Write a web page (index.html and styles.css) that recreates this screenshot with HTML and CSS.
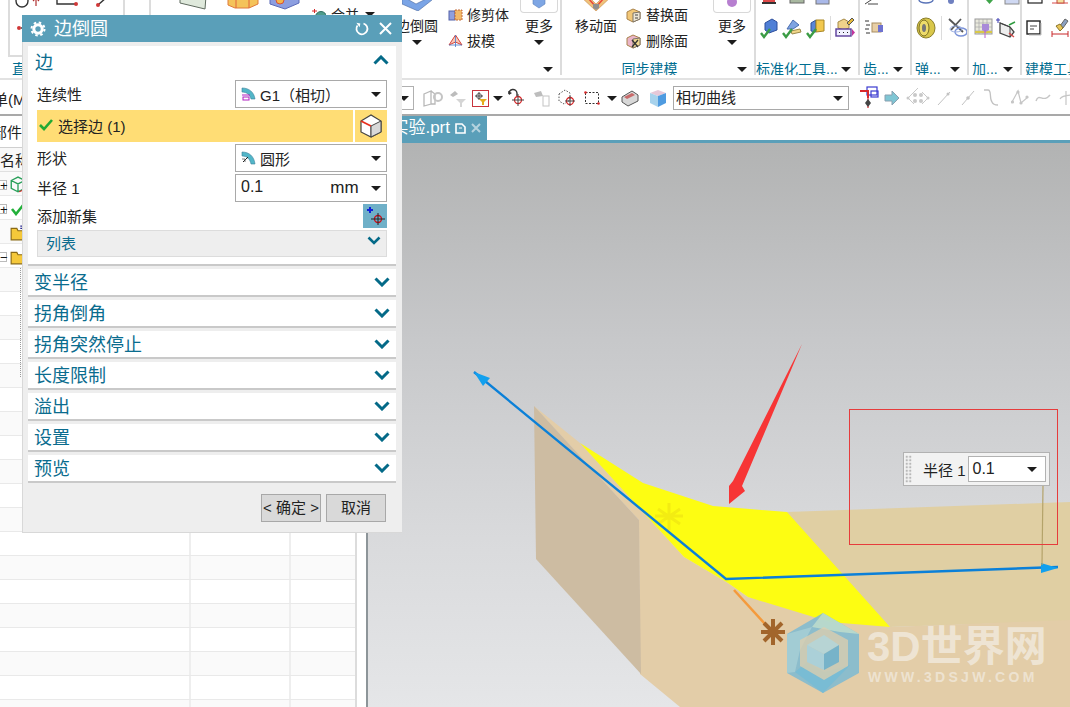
FILE: index.html
```html
<!DOCTYPE html>
<html lang="zh">
<head>
<meta charset="utf-8">
<title>边倒圆</title>
<link rel="stylesheet" href="styles.css">
</head>
<body>
<div class="app">

  <header class="ribbon">
    <section class="group g1">
      <div class="g-body">
        <div class="sketch-box">
          <svg width="114" height="56" viewBox="9 0 114 56">
            <circle cx="21" cy="1" r="6" class="ln"/>
            <path d="M35 6V-2M32 1l3-3 3 3" class="ln-red"/>
            <path d="M56-2V4H75" class="ln"/><circle cx="75" cy="4" r="2" class="dot"/>
            <path d="M97 5L106-3" class="ln"/><circle cx="97" cy="5" r="2" class="dot"/>
            <circle cx="18" cy="28" r="2" class="dot"/><path d="M20 28H24" class="ln"/>
          </svg>
        </div>
      </div>
      <div class="g-foot"><span class="g-label first">直</span></div>
    </section>

    <section class="group g2">
      <div class="g-body">
        <svg class="top-strip" width="160" height="12" viewBox="150 0 160 12">
          <path d="M179 -4L205 -4 204 9 179 3Z" fill="#dfe9dc" stroke="#5f6b5f"/>
          <path d="M227 -3H257V4L248 8H234L227 5Z" fill="#f4c35a" stroke="#e07a3a"/>
          <path d="M235 0V8M248 0V8" stroke="#e0653a"/>
          <path d="M269 -3H298V3L284 9 269 4Z" fill="#8c9ee0" stroke="#5a6ab8"/>
          <circle cx="279" cy="0" r="4" fill="#f2b64a" stroke="#d8503a"/>
        </svg>
        <div class="merge">
          <svg width="15" height="12" viewBox="0 0 15 12"><path d="M1 3H6M3.500 1V5" stroke="#d8282a" fill="none"/><circle cx="10" cy="9" r="5.500" fill="#4e9c8c" stroke="#2d6d60"/></svg>
          <span>合并</span><i class="caret"></i>
        </div>
        <div class="big fillet">
          <div class="big-ico"><svg width="30" height="11" viewBox="0 0 30 11"><path d="M0-4L14 4 30-4V0L16 11 0 4Z" fill="#7aa4e6" stroke="#49689f" stroke-width=".6"/></svg></div>
          <span>边倒圆</span><i class="caret"></i>
        </div>
        <div class="small-col trim">
          <div class="small-row">
            <svg width="15" height="14" viewBox="0 0 15 14"><rect x="1" y="3" width="6" height="9" fill="#8f9fe0" stroke="#5562a8"/><rect x="7" y="2" width="7" height="10" fill="#f2b96a" stroke="#c26a3a" stroke-dasharray="2 1"/></svg>
            <span>修剪体</span>
          </div>
          <div class="small-row">
            <svg width="15" height="14" viewBox="0 0 15 14"><path d="M1 11L7.500 1 14 11 7.500 8Z" fill="#f6c9b8" stroke="#d8433a"/><path d="M7.500 1V13M1 11H14" stroke="#4a78c8" stroke-width=".8"/></svg>
            <span>拔模</span>
          </div>
        </div>
        <div class="more more-a">
          <div class="more-box"><svg width="14" height="9" viewBox="0 0 14 9"><path d="M1-2H13V4L7 8 1 4Z" fill="#7ea6e4" stroke="#5b80bb" stroke-width=".6"/></svg></div>
          <span>更多</span><i class="caret"></i>
        </div>
      </div>
      <div class="g-foot end"><i class="caret"></i></div>
    </section>

    <section class="group g3">
      <div class="g-body">
        <div class="big move">
          <div class="big-ico"><svg width="32" height="11" viewBox="0 0 32 11"><path d="M0-4L16 11 32-4H24L16 4 8-4Z" fill="#efc27a" stroke="#c78a4a" stroke-width=".6"/><path d="M8-2L16 7 24-2" stroke="#e9483c" stroke-width="1.500" fill="none"/><path d="M13 4h6v4l-3 2-3-2z" fill="#8f8f8f"/></svg></div>
          <span>移动面</span>
        </div>
        <div class="small-col sync">
          <div class="small-row">
            <svg width="15" height="15" viewBox="0 0 15 15"><path d="M1 4L7 1 14 4V11L7 14 1 11Z" fill="#f2c777" stroke="#a9824a"/><path d="M7 5L14 4V11L7 14Z" fill="#ede6d4" stroke="#7d7468"/><path d="M9 7H12M9 10H12" stroke="#444"/></svg>
            <span>替换面</span>
          </div>
          <div class="small-row">
            <svg width="15" height="15" viewBox="0 0 15 15"><path d="M1 4L7 1 14 4V11L7 14 1 11Z" fill="#e9b4c8" stroke="#a9824a"/><path d="M7 5L14 4V11L7 14Z" fill="#f0d890" stroke="#7d7468"/><path d="M6 6L12 13M12 6L6 13" stroke="#333" stroke-width="1.300"/></svg>
            <span>删除面</span>
          </div>
        </div>
        <div class="more more-b">
          <div class="more-box"><svg width="14" height="9" viewBox="0 0 14 9"><circle cx="7" cy="2" r="5" fill="#b77fd0"/></svg></div>
          <span>更多</span><i class="caret"></i>
        </div>
      </div>
      <div class="g-foot"><span class="g-label">同步建模</span><i class="caret"></i></div>
    </section>

    <section class="group g4">
      <div class="g-body icons-body">
        <div class="clip-row">
          <svg width="100" height="5" viewBox="0 0 100 5"><rect x="7" y="-4" width="12" height="6" fill="#e04a4a"/><rect x="6" y="2" width="14" height="2" fill="#333"/><rect x="34" y="-4" width="14" height="7" fill="#a8b8a0" stroke="#666"/><rect x="60" y="-4" width="13" height="8" fill="#a9b8e8" stroke="#777"/><rect x="80" y="-3" width="8" height="2" fill="#f0dcc0"/></svg>
        </div>
        <div class="icon-row">
          <svg class="ic" width="18" height="22" viewBox="0 0 18 22"><path d="M5 6L12 2 17 5V13L9 16 5 13Z" fill="#4f7fd6" stroke="#2d4f9c"/><path d="M1 16L4 20 10 12" stroke="#3b9c45" stroke-width="2.400" fill="none"/></svg>
          <svg class="ic" width="20" height="22" viewBox="0 0 20 22"><path d="M5 12L11 3 17 8 11 12Z" fill="#7ea4e2" stroke="#4a6db0"/><path d="M9 14L18 12 19 15 10 17Z" fill="#f0d68a" stroke="#9c8a4a"/><path d="M1 16L4 20 10 12" stroke="#3b9c45" stroke-width="2.400" fill="none"/></svg>
          <svg class="ic" width="19" height="22" viewBox="0 0 19 22"><path d="M5 6L10 3V15L5 14Z" fill="#5a86d8" stroke="#2f5098"/><path d="M10 3L18 3V14L10 15Z" fill="#f2c84e" stroke="#a88624"/><path d="M1 16L4 20 10 12" stroke="#3b9c45" stroke-width="2.400" fill="none"/></svg>
          <i class="vsep"></i>
          <svg class="ic" width="20" height="22" viewBox="0 0 20 22"><path d="M3 5L9 2 14 5V11L9 13 3 11Z" fill="#efd28a" stroke="#a68a48"/><path d="M12 6L17 1 19 3 14 8Z" fill="#e4b83a" stroke="#555"/><rect x="1" y="12" width="15" height="7" fill="#f1f1ff" stroke="#5a3d9a" stroke-width="1.400"/><path d="M4 15.500h1M8 15.500h1M12 15.500h1" stroke="#222"/><path d="M17 12l3 3.500-3 3.500z" fill="#c2359c"/></svg>
        </div>
      </div>
      <div class="g-foot"><span class="g-label">标准化工具...</span><i class="caret"></i></div>
    </section>

    <section class="group g5">
      <div class="g-body icons-body">
        <div class="clip-row"><svg width="40" height="5" viewBox="0 0 40 5"><path d="M5 4L14-2M8 4H18" stroke="#444"/></svg></div>
        <div class="icon-row">
          <svg class="ic" width="20" height="18" viewBox="0 0 20 18"><path d="M1 2H5M2 6H6M1 10H5M2 14H6" stroke="#333"/><rect x="8" y="4" width="9" height="9" fill="#e8cfa6" stroke="#a88d62"/><rect x="14" y="6" width="5" height="7" fill="#6e72d0"/></svg>
        </div>
      </div>
      <div class="g-foot"><span class="g-label">齿...</span><i class="caret"></i></div>
    </section>

    <section class="group g6">
      <div class="g-body icons-body">
        <div class="clip-row"><svg width="50" height="5" viewBox="0 0 50 5"><ellipse cx="14" cy="0" rx="7" ry="3" fill="none" stroke="#5a74b8" stroke-width="1.500"/><circle cx="39" cy="1" r="3" fill="#6f80c0"/></svg></div>
        <div class="icon-row">
          <svg class="ic" width="20" height="22" viewBox="0 0 20 22"><ellipse cx="10" cy="11" rx="9" ry="10" fill="#d9c74a" stroke="#8a7e2a"/><ellipse cx="8" cy="11" rx="5" ry="8" fill="#eedc6a" stroke="#7a6e22"/><ellipse cx="8" cy="11" rx="2" ry="4" fill="#777"/></svg>
          <i class="vsep"></i>
          <svg class="ic" width="22" height="22" viewBox="0 0 22 22"><path d="M3 2L17 15M15 2L5 13" stroke="#555" stroke-width="1.800"/><ellipse cx="15" cy="15" rx="6" ry="4" fill="none" stroke="#7a92d8" stroke-width="1.400"/><ellipse cx="10" cy="12" rx="6" ry="3" fill="none" stroke="#9aaee2"/></svg>
        </div>
      </div>
      <div class="g-foot"><span class="g-label">弹...</span><i class="caret"></i></div>
    </section>

    <section class="group g7">
      <div class="g-body icons-body">
        <div class="clip-row"><svg width="52" height="5" viewBox="0 0 52 5"><path d="M17 0h7l-3.500 4z" fill="#3fa54a"/><rect x="36" y="-3" width="14" height="7" fill="#cfd8f2" stroke="#8a8a8a"/></svg></div>
        <div class="icon-row">
          <svg class="ic" width="22" height="22" viewBox="0 0 22 22"><rect x="2" y="2" width="17" height="15" fill="#e9e9dc" stroke="#999"/><path d="M2 6H19M2 10H19M2 14H19M6 2V17M10 2V17M14 2V17" stroke="#aaa" stroke-width=".7"/><path d="M2 15H19" stroke="#d8c84a" stroke-width="2"/><path d="M9 7H16V13L12.500 15 9 13Z" fill="#a98ad8"/><path d="M12 13V21" stroke="#b860d0"/></svg>
          <svg class="ic" width="22" height="24" viewBox="0 0 22 24"><path d="M3 2V7M1 4H5" stroke="#3a3ab0"/><path d="M5 7V17L15 21 19 16 15 11Z" fill="#eee" stroke="#444" stroke-width="1.300"/><path d="M5 7L15 11V21" fill="none" stroke="#444"/><path d="M14 9L20 6" stroke="#2f9c3f" stroke-width="1.500"/><path d="M14 17L19 21" stroke="#d84a4a" stroke-width="1.500"/></svg>
        </div>
      </div>
      <div class="g-foot"><span class="g-label">加...</span><i class="caret"></i></div>
    </section>

    <section class="group g8">
      <div class="g-body icons-body">
        <div class="clip-row"><svg width="50" height="5" viewBox="0 0 50 5"><rect x="6" y="-3" width="14" height="6" fill="#fff" stroke="#222" stroke-width="1.200"/><path d="M30 3H46" stroke="#d84a4a"/><rect x="35" y="-2" width="7" height="5" fill="#f4e0a0" stroke="#c24a3a"/></svg></div>
        <div class="icon-row">
          <svg class="ic" width="16" height="16" viewBox="0 0 16 16"><rect x="1" y="1" width="13" height="13" fill="#fff" stroke="#222" stroke-width="1.400"/><path d="M4 6H11M4 9H8" stroke="#444"/><path d="M15 3V15H3" stroke="#bbb" fill="none"/></svg>
          <svg class="ic" width="18" height="22" viewBox="0 0 18 22"><path d="M9 9L14 2 17 4 12 11Z" fill="#8aa0c0" stroke="#666"/><path d="M5 9L9 7 12 11 9 14Z" fill="#e9c65a" stroke="#8a7428"/><path d="M1 14V20M17 14V20M1 17H17" stroke="#c8282a"/></svg>
        </div>
      </div>
      <div class="g-foot"><span class="g-label tail">建模工具</span></div>
    </section>
  </header>

  <nav class="toolbar">
    <span class="menu-btn">单(M)</span>
    <div class="sel-end"><i class="caret"></i></div>
    <svg class="tool t1" width="22" height="20" viewBox="0 0 22 20"><path d="M2 6L9 3V16L2 18ZM9 3L13 6V16L9 16" fill="none" stroke="#b8b8b8" stroke-width="1.300"/><circle cx="16" cy="9" r="4" fill="none" stroke="#c4c4c4" stroke-width="2"/></svg>
    <svg class="tool t2" width="20" height="20" viewBox="0 0 20 20"><path d="M2 7L7 3 10 6 5 9Z" fill="#bcbcbc"/><path d="M8 11H18L14 15V19H12V15Z" fill="#d5d5d5"/></svg>
    <span class="filter"><svg width="14" height="14" viewBox="0 0 14 14"><circle cx="5" cy="5" r="2.500" fill="none" stroke="#666"/><path d="M5 1V9M1 5H9" stroke="#444"/><path d="M5 8H13L10 11V14H8V11Z" fill="#e6ae1e"/></svg></span>
    <i class="caret tc"></i>
    <svg class="tool t3" width="20" height="20" viewBox="0 0 20 20"><path d="M2 6A4 4 0 0 1 10 5V8" fill="none" stroke="#333" stroke-width="1.400"/><path d="M1 3l1 4 3-2z" fill="#333"/><circle cx="11" cy="12" r="3.500" fill="none" stroke="#d8282a" stroke-width="1.300"/><path d="M11 6V18M5 12H17" stroke="#444"/></svg>
    <svg class="tool t4" width="20" height="20" viewBox="0 0 20 20"><path d="M2 5L9 3 11 8 4 9Z" fill="#bdbdbd"/><rect x="11" y="8" width="6" height="10" fill="none" stroke="#c4c4c4"/></svg>
    <svg class="tool t5" width="22" height="20" viewBox="0 0 22 20"><path d="M2 6L8 2 13 5V12L7 16 2 13Z" fill="none" stroke="#555" stroke-dasharray="1.500 1.500"/><circle cx="13" cy="13" r="3.500" fill="none" stroke="#d8282a" stroke-width="1.300"/><path d="M13 8V18M8 13H18" stroke="#444"/></svg>
    <svg class="tool t6" width="18" height="18" viewBox="0 0 18 18"><rect x="2.500" y="3.500" width="13" height="11" fill="none" stroke="#333" stroke-dasharray="2 1.500"/><circle cx="2.500" cy="3.500" r="1.300" fill="#d8282a"/><circle cx="15.500" cy="14.500" r="1.300" fill="#d8282a"/></svg>
    <i class="caret tc2"></i>
    <svg class="tool t7" width="20" height="20" viewBox="0 0 20 20"><path d="M2 9L12 3 18 7V13L8 18 2 14Z" fill="#d8d8d8" stroke="#555"/><path d="M4 9L12 5 15 7 7 11Z" fill="#c86a6a"/></svg>
    <svg class="tool t8" width="20" height="20" viewBox="0 0 20 20"><path d="M2 5L10 2 18 5 10 8Z" fill="#e6c8d8"/><path d="M2 5L10 8V19L2 15Z" fill="#a7d2ec"/><path d="M18 5L10 8V19L18 15Z" fill="#4f9be0"/></svg>
    <div class="select curve"><span>相切曲线</span><i class="caret"></i></div>
    <svg class="tool t9" width="20" height="24" viewBox="0 0 20 24"><rect x="8" y="1" width="10" height="8" fill="none" stroke="#3a3ad0" stroke-width="1.200"/><rect x="12" y="5" width="7" height="6" fill="none" stroke="#3a3ad0" stroke-width="1.200"/><path d="M1 5H9V12" stroke="#d8282a" stroke-width="2" fill="none"/><path d="M9 12V22" stroke="#d8282a" stroke-width="1.200"/><path d="M9 13l3 4-3 4-3-4z" fill="#444"/></svg>
    <svg class="tool t10" width="18" height="16" viewBox="0 0 18 16"><path d="M2 5H9V1L16 8 9 15V11H2Z" fill="#7fc6d4" stroke="#8aa0b0"/></svg>
    <svg class="tool t11" width="24" height="22" viewBox="0 0 24 22"><path d="M2 11L8 5M8 5L12 1M22 11L16 5M2 11L8 17M22 11L16 17" stroke="#c9c9c9" fill="none"/><circle cx="9" cy="8" r="2" fill="#c9c9c9"/><circle cx="15" cy="8" r="2" fill="#c9c9c9"/><circle cx="9" cy="14" r="2" fill="#c9c9c9"/><circle cx="15" cy="14" r="2" fill="#c9c9c9"/><circle cx="2" cy="11" r="1.500" fill="#c9c9c9"/><circle cx="22" cy="11" r="1.500" fill="#c9c9c9"/></svg>
    <svg class="tool t12" width="14" height="16" viewBox="0 0 14 16"><path d="M1 15L13 2" stroke="#c2c2c2"/><circle cx="11" cy="4" r="1.500" fill="#c2c2c2"/></svg>
    <svg class="tool t13" width="14" height="16" viewBox="0 0 14 16"><path d="M1 15L13 1" stroke="#c2c2c2"/><circle cx="7" cy="8" r="1.800" fill="#c2c2c2"/></svg>
    <svg class="tool t14" width="16" height="20" viewBox="0 0 16 20"><path d="M1 2H5C9 2 6 10 9 14 10 17 13 17 15 17" fill="none" stroke="#c2c2c2" stroke-width="1.300"/></svg>
    <svg class="tool t15" width="18" height="18" viewBox="0 0 18 18"><path d="M1 13L7 2 10 14 17 8" fill="none" stroke="#c6c6c6" stroke-width="1.200"/><circle cx="7" cy="3" r="1.600" fill="#c6c6c6"/><circle cx="1.500" cy="13" r="1.600" fill="#c6c6c6"/><circle cx="10" cy="14" r="1.600" fill="#c6c6c6"/><circle cx="16" cy="8" r="1.600" fill="#c6c6c6"/></svg>
    <svg class="tool t16" width="16" height="12" viewBox="0 0 16 12"><path d="M1 9C4 0 8 12 15 3" fill="none" stroke="#c6c6c6" stroke-width="1.400"/></svg>
    <svg class="tool t17" width="14" height="18" viewBox="0 0 14 18"><path d="M7 2V16M1 10C3 6 10 6 14 6" fill="none" stroke="#c6c6c6" stroke-width="1.200"/></svg>
  </nav>

  <main class="main">
    <aside class="left">
      <div class="part-row"><span>部件</span></div>
      <div class="name-row"><span>名称</span></div>
      <div class="rows">
        <i class="tree-line"></i>
        <div class="row"><div class="cell name">
          <i class="expander">+</i>
          <svg width="16" height="18" viewBox="0 0 14 16"><path d="M1 4L7 1 13 4V11L7 14 1 11ZM1 4L7 7 13 4M7 7V14" fill="none" stroke="#2aa05a" stroke-width="1.200"/><path d="M8 14L13 12" stroke="#d8282a"/></svg>
        </div><div class="cell mid"></div><div class="cell end"></div></div>
        <div class="row"><div class="cell name">
          <i class="expander">+</i>
          <svg width="16" height="14" viewBox="0 0 14 14"><path d="M1 7L5 12 13 2" fill="none" stroke="#22b03a" stroke-width="2.600"/></svg>
        </div><div class="cell mid"></div><div class="cell end"></div></div>
        <div class="row"><div class="cell name">
          <i class="expander blank"></i>
          <svg width="16" height="16" viewBox="0 0 14 14"><path d="M1 3H6L7 5H13V13H1Z" fill="#f5c83a" stroke="#8a6a14"/><path d="M9 1H14M9 3H14" stroke="#2a2a90"/></svg>
        </div><div class="cell mid"></div><div class="cell end"></div></div>
        <div class="row"><div class="cell name">
          <i class="expander">−</i>
          <svg width="16" height="16" viewBox="0 0 14 14"><path d="M1 3H6L7 5H13V13H1Z" fill="#f5c83a" stroke="#8a6a14"/></svg>
        </div><div class="cell mid"></div><div class="cell end"></div></div>
        <div class="row"><div class="cell name"></div><div class="cell mid"></div><div class="cell end"></div></div>
        <div class="row"><div class="cell name"></div><div class="cell mid"></div><div class="cell end"></div></div>
        <div class="row"><div class="cell name"></div><div class="cell mid"></div><div class="cell end"></div></div>
        <div class="row"><div class="cell name"></div><div class="cell mid"></div><div class="cell end"></div></div>
        <div class="row"><div class="cell name"></div><div class="cell mid"></div><div class="cell end"></div></div>
        <div class="row"><div class="cell name"></div><div class="cell mid"></div><div class="cell end"></div></div>
        <div class="row"><div class="cell name"></div><div class="cell mid"></div><div class="cell end"></div></div>
        <div class="row"><div class="cell name"></div><div class="cell mid"></div><div class="cell end"></div></div>
        <div class="row"><div class="cell name"></div><div class="cell mid"></div><div class="cell end"></div></div>
        <div class="row"><div class="cell name"></div><div class="cell mid"></div><div class="cell end"></div></div>
        <div class="row"><div class="cell name"></div><div class="cell mid"></div><div class="cell end"></div></div>
        <div class="row"><div class="cell name"></div><div class="cell mid"></div><div class="cell end"></div></div>
        <div class="row"><div class="cell name"></div><div class="cell mid"></div><div class="cell end"></div></div>
        <div class="row"><div class="cell name"></div><div class="cell mid"></div><div class="cell end"></div></div>
        <div class="row"><div class="cell name"></div><div class="cell mid"></div><div class="cell end"></div></div>
        <div class="row"><div class="cell name"></div><div class="cell mid"></div><div class="cell end"></div></div>
        <div class="row"><div class="cell name"></div><div class="cell mid"></div><div class="cell end"></div></div>
        <div class="row"><div class="cell name"></div><div class="cell mid"></div><div class="cell end"></div></div>
        <div class="row"><div class="cell name"></div><div class="cell mid"></div><div class="cell end"></div></div>
      </div>
    </aside>

    <div class="work">
      <div class="tabbar">
        <div class="tab"><span>实验.prt</span>
          <svg width="11" height="11" viewBox="0 0 11 11"><path d="M1 1H7L10 4V10H1Z" fill="none" stroke="#fff" stroke-width="1.600"/><path d="M4 5H7" stroke="#fff"/></svg>
          <svg width="10" height="10" viewBox="0 0 10 10"><path d="M1 1L9 9M9 1L1 9" stroke="#b5d3df" stroke-width="2"/></svg>
        </div>
      </div>
      <div class="viewport">
        <svg class="scene" width="704" height="564" viewBox="366 143 704 564">
          <polygon points="787,512 1070,502 1070,621 890,627 800,600" fill="#e0cfa3"/>
          <polygon points="534,406 639,520 640,674 680,707 1070,707 1070,620 890,627 748,597 728,583 684,557 580,443" fill="#e3cda8"/>
          <polygon points="534,406 639,520 641,674 536,559" fill="#cdbca2"/>
          <polygon points="580,443 643,483 713,506 787,512 890,627 830,622 748,597 728,583 684,557" fill="#fdfd12"/>
          <path d="M669 503V530M658 509L680 524M680 509L658 524M655 516H683" stroke="#f3ec12" stroke-width="3"/>
          <path d="M734 590L765 624" stroke="#f49a3c" stroke-width="2.500"/>
          <path d="M773 619V645M761 632H785M764 623L782 641M782 623L764 641" stroke="#a2652b" stroke-width="4"/>
          <path d="M474 372L726 579 1058 567" fill="none" stroke="#0b80d8" stroke-width="2.400"/>
          <polygon points="474,372 490,378 483,386" fill="#12a0ee"/>
          <polygon points="1058,568 1041,563 1041,573" fill="#12a0ee"/>
          <path d="M1043 486L1042 565" stroke="#b4a36a" stroke-width="1.200"/>
          <polygon points="802,344 742,486 745,491 729,504 729,486 733,481" fill="#f73535"/>
          <rect x="849.500" y="409.500" width="208" height="135" fill="none" stroke="#e63c3c"/>

          <polygon points="823,613 859,634 859,673 823,693 787,673 787,634" fill="#7dbad2" fill-opacity=".85"/>
          <polygon points="823,613 859,634 840,632 812,627" fill="#c6e2cc" fill-opacity=".75"/>
          <polygon points="787,634 812,627 800,650 795,672 787,673" fill="#a8d0d6" fill-opacity=".8"/>
          <polygon points="795,672 807,662 824,672 850,665 823,693" fill="#79bcd4"/>
          <polygon points="824,627 848,640 848,666 824,680 800,666 800,640" fill="#dfcfae" fill-opacity=".75"/>
          <polygon points="824,635 839,645 824,654 807,645" fill="#b7d4d4"/>
          <polygon points="807,645 824,654 824,670 807,662" fill="#abd0d8"/>
          <polygon points="839,645 839,662 824,670 824,654" fill="#77b3c9"/>

          <text x="867" y="661" class="wm-main">3D世界网</text>
          <text x="868" y="682" class="wm-sub">WWW.3DSJW.COM</text>
        </svg>
        <div class="float-radius">
          <i class="grip"></i>
          <span>半径 1</span>
          <div class="float-input"><span>0.1</span><i class="caret"></i></div>
        </div>
      </div>
    </div>
  </main>

  <div class="dialog">
    <div class="d-title">
      <svg class="gear" width="16" height="16" viewBox="0 0 16 16"><circle cx="8" cy="8" r="4.200" fill="none" stroke="#fff" stroke-width="3"/><circle cx="8" cy="8" r="6.500" fill="none" stroke="#fff" stroke-width="2" stroke-dasharray="2.500 2.600"/></svg>
      <span class="d-name">边倒圆</span>
      <svg class="reset" width="14" height="14" viewBox="0 0 14 14"><path d="M8.500 1.500A5.500 5.500 0 1 1 2.500 3.500" fill="none" stroke="#fff" stroke-width="1.800"/><path d="M1 1H5V5Z" fill="#fff" transform="rotate(10 3 3)"/></svg>
      <svg class="close" width="13" height="13" viewBox="0 0 13 13"><path d="M1 1L12 12M12 1L1 12" stroke="#fff" stroke-width="2"/></svg>
    </div>
    <div class="d-body">
      <section class="sec open">
        <div class="sec-head">
          <span>边</span>
          <svg width="16" height="10" viewBox="0 0 16 10"><path d="M1.500 8.500L8 2 14.500 8.500" fill="none" stroke="#046a88" stroke-width="3"/></svg>
        </div>
        <div class="form-row">
          <label>连续性</label>
          <div class="select pick">
            <svg width="15" height="16" viewBox="0 0 15 16"><path d="M1 2C8 2 13 6 14 13H10C9 9 6 6 1 6Z" fill="#52b6c8" stroke="#3a7f9a" stroke-width=".6"/><rect x="2" y="11" width="6" height="3" fill="none" stroke="#b020c0"/><path d="M1 9H9" stroke="#b020c0"/></svg>
            <span>G1（相切）</span><i class="caret"></i>
          </div>
        </div>
        <div class="pick-row">
          <div class="pick-main">
            <svg width="14" height="12" viewBox="0 0 14 12"><path d="M1 6L5 10 13 1" fill="none" stroke="#22aa33" stroke-width="2.600"/></svg>
            <span>选择边 (1)</span>
          </div>
          <div class="pick-btn">
            <svg width="22" height="24" viewBox="0 0 22 24"><path d="M1 7L11 1 21 7V18L11 23 1 18Z" fill="#fff" stroke="#444" stroke-width="1.200"/><path d="M11 12V23" stroke="#444"/><path d="M11 12L21 7V18L11 23Z" fill="#d8d8d8" stroke="#444"/><path d="M1 7L11 12" stroke="#e8301e" stroke-width="1.800"/></svg>
          </div>
        </div>
        <div class="form-row">
          <label>形状</label>
          <div class="select pick">
            <svg width="15" height="16" viewBox="0 0 15 16"><path d="M1 2C8 2 13 6 14 14H10C9 9 6 6 1 6Z" fill="#52b6c8" stroke="#3a7f9a" stroke-width=".6"/><path d="M2 12L7 7" stroke="#222"/><path d="M1 9h3v3" fill="none" stroke="#555" stroke-width=".8"/></svg>
            <span>圆形</span><i class="caret"></i>
          </div>
        </div>
        <div class="form-row">
          <label>半径 1</label>
          <div class="select value"><span class="num">0.1</span><span class="unit">mm</span><i class="caret"></i></div>
        </div>
        <div class="form-row add">
          <label>添加新集</label>
          <div class="add-btn"><svg width="20" height="20" viewBox="0 0 20 20"><path d="M2 4H8M5 1V7" stroke="#1020d8" stroke-width="2"/><circle cx="13" cy="13" r="3.500" fill="none" stroke="#c8141e" stroke-width="1.400"/><path d="M13 7V19M6 13H20" stroke="#222"/></svg></div>
        </div>
        <div class="list-row">
          <span>列表</span>
          <svg width="14" height="9" viewBox="0 0 14 9"><path d="M1.500 1.500L7 7 12.500 1.500" fill="none" stroke="#046a88" stroke-width="2.600"/></svg>
        </div>
      </section>
      <section class="sec shut"><span>变半径</span><svg width="16" height="10" viewBox="0 0 16 10"><path d="M1.500 1.500L8 8 14.500 1.500" fill="none" stroke="#046a88" stroke-width="3"/></svg></section>
      <section class="sec shut"><span>拐角倒角</span><svg width="16" height="10" viewBox="0 0 16 10"><path d="M1.500 1.500L8 8 14.500 1.500" fill="none" stroke="#046a88" stroke-width="3"/></svg></section>
      <section class="sec shut"><span>拐角突然停止</span><svg width="16" height="10" viewBox="0 0 16 10"><path d="M1.500 1.500L8 8 14.500 1.500" fill="none" stroke="#046a88" stroke-width="3"/></svg></section>
      <section class="sec shut"><span>长度限制</span><svg width="16" height="10" viewBox="0 0 16 10"><path d="M1.500 1.500L8 8 14.500 1.500" fill="none" stroke="#046a88" stroke-width="3"/></svg></section>
      <section class="sec shut"><span>溢出</span><svg width="16" height="10" viewBox="0 0 16 10"><path d="M1.500 1.500L8 8 14.500 1.500" fill="none" stroke="#046a88" stroke-width="3"/></svg></section>
      <section class="sec shut"><span>设置</span><svg width="16" height="10" viewBox="0 0 16 10"><path d="M1.500 1.500L8 8 14.500 1.500" fill="none" stroke="#046a88" stroke-width="3"/></svg></section>
      <section class="sec shut"><span>预览</span><svg width="16" height="10" viewBox="0 0 16 10"><path d="M1.500 1.500L8 8 14.500 1.500" fill="none" stroke="#046a88" stroke-width="3"/></svg></section>
      <div class="d-foot">
        <button class="btn" type="button">&lt; 确定 &gt;</button>
        <button class="btn" type="button">取消</button>
      </div>
    </div>
  </div>
</div>
</body>
</html>
```

FILE: styles.css
```css
* { box-sizing: border-box; }
html, body { margin: 0; padding: 0; }
body {
  width: 1070px;
  height: 707px;
  overflow: hidden;
  background: #fff;
  color: #222;
  font-family: "Liberation Sans", "Noto Sans CJK SC", sans-serif;
  font-size: 14px;
}
i { font-style: normal; display: block; }
svg { display: block; flex: none; }

.app { position: relative; width: 1070px; height: 707px; overflow: hidden; display: flex; flex-direction: column; }

.caret {
  width: 0; height: 0; flex: none;
  border-left: 5px solid transparent;
  border-right: 5px solid transparent;
  border-top: 5.500px solid #1c1c1c;
}

/* ribbon */
.ribbon { display: flex; height: 80px; flex: none; border-bottom: 2px solid #e2e2e2; background: #fff; overflow: hidden; }
.group { display: flex; flex-direction: column; height: 75px; flex: none; border-right: 2px solid #dcdcdc; }
.g-body { height: 60px; display: flex; overflow: hidden; flex: none; }
.g-foot { flex: 1; display: flex; align-items: center; font-size: 14px; color: #006d90; line-height: 18px; white-space: nowrap; overflow: hidden; padding-top: 3px; }
.g-foot .caret { margin-left: auto; margin-right: 7px; }
.g-foot.end { justify-content: flex-end; }
.g-label { flex: 1; text-align: center; }
.g1 { width: 151px; }
.g2 { width: 411px; }
.g3 { width: 194px; }
.g4 { width: 104px; }
.g5 { width: 52px; }
.g6 { width: 57px; }
.g7 { width: 53px; }
.g8 { flex: 1; border-right: 0; }
.g-label.first { flex: none; margin-left: 12px; }
.g-label.tail { flex: none; margin-left: 3px; }
.g4 .g-foot .g-label { flex: none; margin-left: 0; width: 81px; text-align: left; }
.g5 .g-label, .g6 .g-label, .g7 .g-label { flex: none; text-align: left; margin-left: 3px; }

.sketch-box { margin-left: 8px; width: 117px; height: 57px; border: 2px solid #dcdcdc; border-top: 0; }
.ln { fill: none; stroke: #333; stroke-width: 1.400; }
.ln-red { fill: none; stroke: #b03030; stroke-width: 1.200; }
.dot { fill: #d03838; }

.merge { width: 84px; flex: none; display: flex; align-items: center; height: 28px; gap: 5px; }
.merge .caret { margin-left: 1px; }

.big { width: 44px; flex: none; display: flex; flex-direction: column; align-items: center; }
.big-ico { height: 14px; overflow: hidden; display: flex; align-items: flex-start; justify-content: center; }
.big span { line-height: 20px; margin-top: 2px; white-space: nowrap; }
.big .caret { margin-top: 4px; }

.small-col { display: flex; flex-direction: column; padding-top: 2px; flex: none; }
.small-row { height: 26px; display: flex; align-items: center; gap: 4px; white-space: nowrap; }
.small-row span { line-height: 20px; }
.trim { margin-left: 9px; width: 63px; }
.move { margin-left: 12px; }
.sync { margin-left: 8px; width: 65px; }
.sync .small-row { gap: 5px; }

.more { width: 38px; flex: none; display: flex; flex-direction: column; align-items: center; }
.more-box { width: 38px; height: 13px; border: 1px solid #d8d8d8; border-top: 0; border-radius: 0 0 4px 4px; display: flex; justify-content: center; overflow: hidden; }
.more span { line-height: 20px; margin-top: 3px; }
.more .caret { margin-top: 4px; }
.more-a { margin-left: 9px; }
.more-b { margin-left: 22px; }

.icons-body { flex-direction: column; }
.clip-row { height: 5px; overflow: hidden; }
.icon-row { display: flex; align-items: center; height: 24px; margin-top: 11px; padding-left: 4px; }
.ic { margin-right: 4px; }
.vsep { width: 1px; height: 24px; background: #dcdcdc; margin: 0 4px 0 1px; flex: none; }
.g7 .ic { margin-right: 0; }
.g8 .ic { margin-right: 9px; }

/* toolbar */
.toolbar { height: 36px; flex: none; border-bottom: 2px solid #a9a9a9; display: flex; align-items: center; white-space: nowrap; overflow: hidden; position: relative; padding-top: 2px; }
.menu-btn { width: 22px; flex: none; text-indent: -7px; font-size: 15px; overflow: hidden; }
.sel-end { width: 30px; height: 24px; flex: none; border: 1.500px solid #b0b0b0; border-left: 0; display: flex; align-items: center; justify-content: flex-end; padding-right: 4px; margin-left: 362px; }
.tool { margin-left: 2px; }
.t1 { margin-left: 8px; }
.t2 { margin-left: 4px; }
.filter { width: 17px; height: 17px; flex: none; margin-left: 4px; border: 1.500px solid #c8343c; display: flex; align-items: center; justify-content: center; }
.tc { margin-left: 4px; }
.t3 { margin-left: 4px; }
.t4 { margin-left: 5px; }
.t5 { margin-left: 5px; }
.t6 { margin-left: 4px; }
.tc2 { margin-left: 6px; }
.t7 { margin-left: 3px; }
.t8 { margin-left: 8px; }
.select { display: flex; align-items: center; background: #fff; border: 1.500px solid #a9a9a9; flex: none; }
.select .caret { margin-left: auto; }
.curve { width: 176px; height: 24px; margin-left: 5px; padding: 0 5px 0 2px; font-size: 15px; line-height: 20px; }
.t9 { margin-left: 10px; }
.t10 { margin-left: 4px; }
.t11 { margin-left: 5px; }
.t12 { margin-left: 7px; }
.t13 { margin-left: 10px; }
.t14 { margin-left: 8px; }
.t15 { margin-left: 12px; }
.t16 { margin-left: 6px; }
.t17 { margin-left: 8px; }

/* main */
.main { flex: 1; display: flex; min-height: 0; }
.left { width: 366px; flex: none; display: flex; flex-direction: column; overflow: hidden; }
.part-row { height: 32px; flex: none; border-bottom: 1px solid #cfcfcf; width: 100%; display: flex; align-items: center; font-size: 15px; white-space: nowrap; }
.part-row span { margin-left: -8px; }
.name-row { height: 24px; flex: none; border-bottom: 1px solid #e0e0e0; display: flex; align-items: center; font-size: 15px; width: 357px; background: #f8f8f8; border-right: 1px solid #d8d8d8; }
.rows { flex: 1; width: 357px; border-right: 2px solid #dcdcdc; overflow: hidden; position: relative; }
.tree-line { position: absolute; left: 20px; top: 96px; height: 109px; width: 0; border-left: 1px dotted #999; }
.row { height: 24px; display: flex; border-bottom: 1.500px solid #e9e9e9; }
.row:nth-of-type(odd) { background: #fafafa; }
.cell { height: 100%; }
.cell.name { width: 191px; flex: none; border-right: 2px solid #eeeeee; display: flex; align-items: center; gap: 3px; padding-top: 2px; }
.cell.mid { width: 100px; flex: none; border-right: 2px solid #eeeeee; }
.cell.end { flex: 1; }
.expander { width: 7px; height: 10px; flex: none; font-size: 13px; line-height: 9px; text-align: right; border: 1px solid #bbb; border-left: 0; background: #fff; color: #111; }
.expander.blank { border: 0; background: none; }

.work { flex: 1; display: flex; flex-direction: column; min-width: 0; }
.tabbar { height: 27px; flex: none; background: #fff; border-bottom: 3px solid #5a9fb9; }
.tab { width: 121px; height: 24px; background: #5a9fb9; color: #fff; font-size: 17px; line-height: 24px; display: flex; align-items: center; justify-content: flex-end; gap: 5px; padding-right: 6px; white-space: nowrap; }
.viewport { flex: 1; position: relative; border-left: 2px solid #8d9599; background: linear-gradient(180deg, #b2b3b3 0%, #c7c8ca 35%, #d9dadc 70%, #e5e6e8 100%); overflow: hidden; }
.scene { position: absolute; left: -2px; top: 0; }
.wm-main { font-family: "Liberation Sans", "Noto Sans CJK SC", sans-serif; font-size: 42px; font-weight: 700; fill: #f1e9dc; fill-opacity: .85; }
.wm-sub { font-family: "Liberation Sans", sans-serif; font-size: 14px; font-weight: 700; letter-spacing: 3.300px; fill: #f1e9dc; fill-opacity: .8; }

.float-radius { position: absolute; left: 535px; top: 309px; width: 147px; height: 34px; background: #f2f2f2; border: 1.500px solid #b2b2b2; display: flex; align-items: center; }
.grip { width: 7px; height: 28px; margin-left: 1px; flex: none; background-image: radial-gradient(circle, #b8b8b8 1.300px, transparent 1.400px); background-size: 3.500px 3.500px; }
.float-radius > span { font-size: 15px; margin-left: 11px; white-space: nowrap; }
.float-input { margin-left: 2px; width: 78px; height: 26px; background: #fff; border: 1.500px solid #b2b2b2; display: flex; align-items: center; padding: 0 5px 0 4px; font-size: 16px; }
.float-input .caret { margin-left: auto; margin-right: 3px; }

/* dialog */
.dialog { position: absolute; left: 22px; top: 15px; width: 380px; height: 518px; background: #eeeeee; border-bottom: 1px solid #d8d8d8; border-left: 1px solid #d8d8d8; display: flex; flex-direction: column; }
.d-title { height: 27px; flex: none; margin-left: -1px; background: #5a9fb9; color: #fff; display: flex; align-items: center; padding-left: 8px; padding-right: 10px; }
.d-name { font-size: 18px; margin-left: 8px; line-height: 24px; }
.reset { margin-left: auto; }
.close { margin-left: 10px; }
.d-body { flex: 1; padding: 4px 6px 0 5px; display: flex; flex-direction: column; gap: 3px; }
.sec { background: #fff; border-bottom: 2px solid #c9c9c9; color: #0a6c8e; flex: none; }
.sec.open { height: 220px; padding: 0 9px; }
.sec-head { height: 34px; display: flex; align-items: center; justify-content: space-between; font-size: 18px; margin-left: -2px; }
.sec-head svg { margin-right: -2px; margin-top: -6px; }
.sec-head span { margin-top: -5px; }
.sec.shut { height: 28px; padding: 0 6px; display: flex; align-items: center; justify-content: space-between; font-size: 18px; line-height: 24px; }
.sec.shut span { padding-top: 1px; }
.sec.shut svg { margin-top: -1px; }
.form-row { display: flex; align-items: center; justify-content: space-between; color: #222; height: 28px; margin-bottom: 2px; font-size: 15px; }
.form-row label { line-height: 20px; padding-top: 1px; }
.form-row .select { width: 152px; height: 28px; padding: 0 5px 0 5px; gap: 4px; }
.pick-row { display: flex; height: 32px; gap: 2px; margin-bottom: 2px; }
.pick-main { flex: 1; background: #ffdd75; display: flex; align-items: center; gap: 5px; padding: 0 0 2px 2px; color: #222; font-size: 15px; }
.pick-btn { width: 32px; background: #ffdd75; display: flex; align-items: center; justify-content: center; }
.value .num { font-size: 16px; margin-top: -2px; }
.value .unit { margin-left: 63px; font-size: 17px; }
.form-row.add { height: 24px; }
.add-btn { width: 24px; height: 24px; background: #6fb0c8; display: flex; align-items: center; justify-content: center; }
.list-row { height: 27px; background: #eeeeee; border: 1px solid #dcdcdc; display: flex; align-items: center; justify-content: space-between; padding: 0 5px 2px 8px; color: #0a6c8e; font-size: 15px; }
.list-row svg { margin-top: -4px; }
.d-foot { display: flex; justify-content: flex-end; gap: 5px; padding: 8px 10px 0 0; }
.btn { width: 60px; height: 28px; padding: 0; background: #d9d9d9; border: 1.500px solid #a8a8a8; font-family: inherit; font-size: 15px; line-height: 20px; color: #222; }
```
